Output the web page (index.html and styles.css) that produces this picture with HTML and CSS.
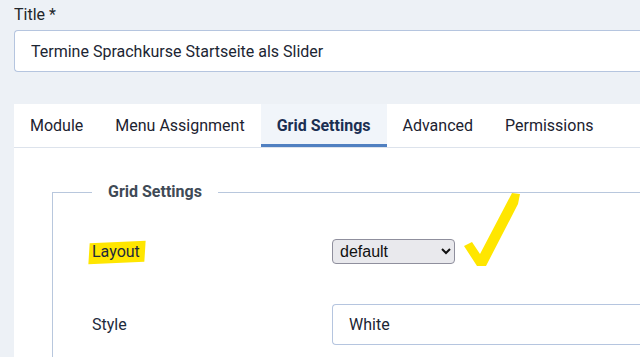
FILE: index.html
```html
<!DOCTYPE html>
<html lang="de">
<head>
    <meta charset="UTF-8">
    <meta name="viewport" content="width=device-width, initial-scale=1.0">
    <title>Module: Grid Settings</title>
    <link rel="stylesheet" href="styles.css">
</head>
<body>
    <div class="title-group">
        <label class="title-label" for="jform_title">Title *</label>
        <input id="jform_title" class="form-control title-input" type="text" value="Termine Sprachkurse Startseite als Slider">
    </div>

    <div class="tabs">
        <div class="tab-list">
            <button class="tab">Module</button>
            <button class="tab">Menu Assignment</button>
            <button class="tab active">Grid Settings</button>
            <button class="tab">Advanced</button>
            <button class="tab">Permissions</button>
        </div>

        <div class="tab-panel">
            <fieldset class="options">
                <legend>Grid Settings</legend>

                <div class="control-group">
                    <div class="control-label"><span class="marker">Layout</span></div>
                    <div class="controls">
                        <select class="layout-select">
                            <option>default</option>
                        </select>
                    </div>
                </div>

                <div class="control-group">
                    <div class="control-label">Style</div>
                    <div class="controls">
                        <input class="form-control style-input" type="text" value="White">
                    </div>
                </div>
            </fieldset>
        </div>
    </div>

    <!-- yellow tick drawn over the screenshot -->
    <svg class="tick" width="64" height="80" viewBox="0 0 64 80">
        <path d="M3 57 L11 53 L19 65 L51 4 L59 5 L57 15 L25 77 L16 77 Z" fill="#ffe600"/>
    </svg>
</body>
</html>
```

FILE: styles.css
```css
* {
    margin: 0;
    padding: 0;
    box-sizing: border-box;
}

html, body {
    width: 640px;
    height: 357px;
    overflow: hidden;
}

body {
    font-family: Roboto, "Noto Sans", sans-serif;
    background: #edf1f6;
    color: #1f2733;
    padding-left: 14px;
    position: relative;
}

.title-group {
    padding-top: 5px;
    overflow: hidden;
}

.title-label {
    display: block;
    font-size: 16px;
    line-height: 20px;
    color: #22262a;
}

.form-control {
    font-family: Roboto, "Noto Sans", sans-serif;
    font-size: 16px;
    color: #1c2533;
    background: #fff;
    border: 1px solid #b5c5df;
    border-right: none;
    border-radius: 4px 0 0 4px;
    height: 42px;
    padding: 0 16px;
    width: 100%;
    outline: none;
}

.title-input {
    margin-top: 5px;
}

.tabs {
    margin-top: 32px;
    background: #fff;
    height: 253px;
    overflow: hidden;
}

.tab-list {
    display: flex;
    height: 44px;
    border-bottom: 1px solid #dde3ec;
}

.tab {
    font-family: Roboto, "Noto Sans", sans-serif;
    font-size: 16px;
    color: #1c2230;
    background: none;
    border: none;
    padding: 2px 16px 0;
    height: 43px;
    border-bottom: 3px solid transparent;
}

.tab.active {
    background: #f1f5fa;
    font-weight: bold;
    color: #1b2f52;
    border-bottom-color: #5080c1;
}

.tab-panel {
    padding: 32px 0 0 38px;
}

.options {
    border: 1px solid #b8c7dd;
    border-right: none;
    border-bottom: none;
    padding: 27px 0 40px 39px;
}

.options legend {
    font-size: 16px;
    font-weight: bold;
    color: #404a56;
    padding: 0 16px;
    line-height: 24px;
}

.control-group {
    display: flex;
    align-items: center;
    height: 41px;
    margin-bottom: 32px;
}

.control-label {
    width: 240px;
    flex-shrink: 0;
    font-size: 16px;
    color: #1d2a3c;
}

.controls {
    flex: 1;
}

.marker {
    position: relative;
    z-index: 0;
}

.marker::before {
    content: "";
    position: absolute;
    left: -3px;
    right: -5px;
    top: 0;
    bottom: -2px;
    background: #ffe600;
    transform: rotate(-2.5deg) skewX(-6deg);
    z-index: -1;
}

.layout-select {
    font-family: "Liberation Sans", Arial, sans-serif;
    font-size: 16px;
    color: #111;
    width: 123px;
    height: 25px;
    background: #e9e9ed;
    border: 1px solid #8f8f9d;
    border-radius: 4px;
    padding-left: 3px;
}

.style-input {
    height: 41px;
}

.tick {
    position: absolute;
    left: 461px;
    top: 189px;
}
```
